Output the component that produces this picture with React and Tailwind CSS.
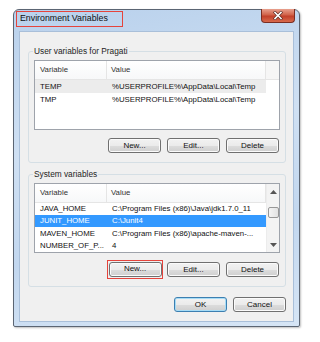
import React from "react";

const userVars = [
  { name: "TEMP", value: "%USERPROFILE%\\AppData\\Local\\Temp", hover: true },
  { name: "TMP", value: "%USERPROFILE%\\AppData\\Local\\Temp" },
];

const systemVars = [
  { name: "JAVA_HOME", value: "C:\\Program Files (x86)\\Java\\jdk1.7.0_11" },
  { name: "JUNIT_HOME", value: "C:\\Junit4", selected: true },
  { name: "MAVEN_HOME", value: "C:\\Program Files (x86)\\apache-maven-..." },
  { name: "NUMBER_OF_P...", value: "4" },
];

function Btn({ label, def }) {
  return (
    <button
      className={`w-[53px] h-[15px] rounded-[3px] border ${
        def
          ? "border-[#3c7fb1] shadow-[inset_0_0_0_1px_#a7dcf6]"
          : "border-[#707070] shadow-[inset_0_0_0_1px_#fbfbfb]"
      } bg-[linear-gradient(#f2f2f2_0%,#ebebeb_50%,#dddddd_51%,#cfcfcf_100%)] text-[8px] leading-none text-[#111] flex items-center justify-center`}
    >
      {label}
    </button>
  );
}

function Scrollbar() {
  return (
    <div className="w-[13px] bg-[#f3f3f3] border-l border-[#ececec] flex flex-col items-center">
      <div className="h-[16px] flex items-center justify-center">
        <svg width="7" height="4" viewBox="0 0 7 4">
          <path d="M0 4 L3.5 0 L7 4 Z" fill="#555" />
        </svg>
      </div>
      <div className="mt-[7px] w-[11px] h-[11px] rounded-[2px] border border-[#979797] bg-[linear-gradient(90deg,#f4f4f4,#e2e2e2)]" />
      <div className="flex-1" />
      <div className="h-[14px] flex items-center justify-center">
        <svg width="7" height="4" viewBox="0 0 7 4">
          <path d="M0 0 L3.5 4 L7 0 Z" fill="#555" />
        </svg>
      </div>
    </div>
  );
}

function ListBox({ rows, scroll, rowH }) {
  return (
    <div className="h-[70px] border border-[#9ea3ab] bg-white flex text-[7.8px]">
      <div className="flex-1 flex flex-col">
        <div className="h-[19px] flex border-b border-[#e5e5e5] bg-[linear-gradient(#ffffff,#f7f8f9)] text-[#333]">
          <div className="w-[72px] pl-[5px] border-r border-[#e5e5e5] flex items-center">Variable</div>
          <div className="flex-1 pl-[4px] border-r border-[#e5e5e5] flex items-center">Value</div>
          {!scroll && <div className="w-[13px] bg-[#f6f6f6]" />}
        </div>
        {rows.map((r) => (
          <div
            key={r.name}
            className={`flex items-center ${scroll ? "" : "mr-[13px]"} ${
              r.selected ? "bg-[#3399ff] text-white" : r.hover ? "bg-[#ececec] text-[#111]" : "text-[#111]"
            }`}
            style={{ height: rowH }}
          >
            <div className="w-[72px] pl-[5px] whitespace-nowrap">{r.name}</div>
            <div className="flex-1 pl-[5px] whitespace-nowrap overflow-hidden">{r.value}</div>
          </div>
        ))}
      </div>
      {scroll && <Scrollbar />}
    </div>
  );
}

function Group({ title, children }) {
  return (
    <fieldset className="border border-[#d5dfe5] rounded-[3px] px-[5px] pb-[9px]">
      <legend className="-ml-[1px] px-[1px] h-[12px] leading-[12px] text-[#1e1e1e]">{title}</legend>
      {children}
    </fieldset>
  );
}

export default function App() {
  return (
    <div className="w-[320px] h-[342px] bg-white pt-[9px] pl-[13px] font-['Liberation_Sans',Arial,sans-serif] text-[8.3px]">
      <div className="w-[287px] h-[318px] flex flex-col rounded-t-[6px] rounded-b-[2px] border border-[#5b6573] bg-[linear-gradient(170deg,#b9d1ec_0%,#cfe0f3_40%,#c2d7ef_70%,#d6e5f5_100%)] px-[5px] pb-[4px] shadow-[1px_1px_2px_rgba(0,0,0,0.25)]">
        {/* title bar */}
        <div className="h-[21px] flex items-start justify-between">
          <span className="-ml-[3px] mt-[1px] h-[16px] pl-[3px] pr-[14px] flex items-center border-[1.5px] border-[#e5443c] text-[8.8px] text-[#111]">
            Environment Variables
          </span>
          <div className="-mt-[1px] -mr-[1px] w-[34px] h-[14px] rounded-b-[4px] border border-[#7a2e22] border-t-0 bg-[linear-gradient(#e8a08e_0%,#d1634a_45%,#c2402a_55%,#d86a4c_100%)] flex items-center justify-center">
            <svg width="10" height="9" viewBox="0 0 10 9">
              <path d="M2 1.5 L8 7.5 M8 1.5 L2 7.5" stroke="#5a2a22" strokeWidth="3" strokeLinecap="square" />
              <path d="M2 1.5 L8 7.5 M8 1.5 L2 7.5" stroke="#ffffff" strokeWidth="1.6" strokeLinecap="square" />
            </svg>
          </div>
        </div>

        {/* client area */}
        <div className="flex-1 bg-[#f0f0f0] border border-[#a9bfd9] pl-[8px] pr-[7px] pt-[13px] flex flex-col">
          <Group title="User variables for Pragati">
            <div className="mt-[3px]">
              <ListBox rows={userVars} rowH={13} />
            </div>
            <div className="mt-[8px] mr-[1px] flex justify-end gap-[6px]">
              <Btn label="New..." />
              <Btn label="Edit..." />
              <Btn label="Delete" />
            </div>
          </Group>

          <div className="mt-[5px]">
            <Group title="System variables">
              <div className="mt-[3px]">
                <ListBox rows={systemVars} rowH={12.5} scroll />
              </div>
              <div className="mt-[9px] mr-[1px] flex justify-end gap-[6px]">
                <span className="-m-[2px] p-[0.5px] border-[1.5px] border-[#e5443c]">
                  <Btn label="New..." />
                </span>
                <Btn label="Edit..." />
                <Btn label="Delete" />
              </div>
            </Group>
          </div>

          <div className="mt-[10px] flex justify-end gap-[6px]">
            <Btn label="OK" def />
            <Btn label="Cancel" />
          </div>
        </div>
      </div>
    </div>
  );
}
